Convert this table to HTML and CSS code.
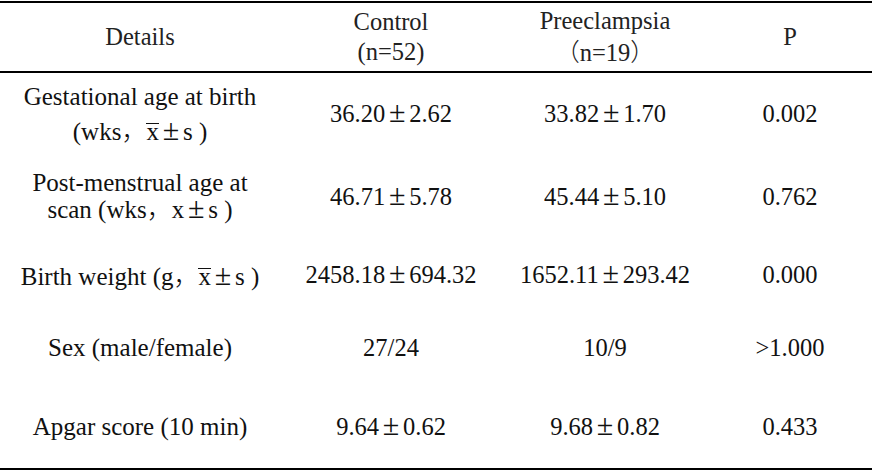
FILE: index.html
```html
<!DOCTYPE html>
<html lang="en">
<head>
<meta charset="utf-8">
<title>Table</title>
<link rel="stylesheet" href="styles.css">
</head>
<body>
<table class="data">
  <colgroup>
    <col class="c1"><col class="c2"><col class="c3"><col class="c4">
  </colgroup>
  <thead>
    <tr class="head">
      <th>Details</th>
      <th><span class="stack">Control<br>(n=52)</span></th>
      <th><span class="stack">Preeclampsia<br><span class="cjk">（</span>n=19<span class="cjk">）</span></span></th>
      <th>P</th>
    </tr>
  </thead>
  <tbody>
    <tr class="r1">
      <td class="label"><span class="stack lh32">Gestational age at birth<br>(wks<span class="cjk">，</span><span class="xbar">x</span><span class="pm">±</span>s )</span></td>
      <td>36.20<span class="pm">±</span>2.62</td>
      <td>33.82<span class="pm">±</span>1.70</td>
      <td>0.002</td>
    </tr>
    <tr class="r2">
      <td class="label"><span class="stack lh24">Post-menstrual age at<br>scan (wks<span class="cjk">，</span>x<span class="pm">±</span>s )</span></td>
      <td>46.71<span class="pm">±</span>5.78</td>
      <td>45.44<span class="pm">±</span>5.10</td>
      <td>0.762</td>
    </tr>
    <tr class="r3">
      <td class="label">Birth weight (g<span class="cjk">，</span><span class="xbar">x</span><span class="pm">±</span>s )</td>
      <td>2458.18<span class="pm">±</span>694.32</td>
      <td>1652.11<span class="pm">±</span>293.42</td>
      <td>0.000</td>
    </tr>
    <tr class="r4">
      <td class="label">Sex (male/female)</td>
      <td>27/24</td>
      <td>10/9</td>
      <td>&gt;1.000</td>
    </tr>
    <tr class="r5">
      <td class="label">Apgar score (10 min)</td>
      <td>9.64<span class="pm">±</span>0.62</td>
      <td>9.68<span class="pm">±</span>0.82</td>
      <td>0.433</td>
    </tr>
  </tbody>
</table>
</body>
</html>
```

FILE: styles.css
```css
html, body {
  margin: 0;
  padding: 0;
  background: #ffffff;
}

body {
  font-family: "Liberation Serif", "Times New Roman", serif;
  font-size: 24.5px;
  color: #111111;
}

.data {
  width: 872px;
  margin-top: 1px;
  border-collapse: collapse;
  table-layout: fixed;
  border-top: 2px solid #000;
  border-bottom: 2px solid #000;
}

.c1 { width: 280px; }
.c2 { width: 222px; }
.c3 { width: 206px; }
.c4 { width: 164px; }

.data th,
.data td {
  padding: 0;
  text-align: center;
  vertical-align: middle;
  font-weight: normal;
  white-space: nowrap;
  line-height: 28px;
}

.data td.label {
  font-size: 25px;
}

.head th {
  height: 68px;
  border-bottom: 2px solid #000;
  color: #222;
}

.stack {
  display: inline-block;
  line-height: 30px;
}

.stack.lh32 { line-height: 32px; }
.stack.lh24 { line-height: 24px; }

.r1 td { height: 82px; }
.r2 td { height: 84px; }
.r3 td { height: 72px; }
.r4 td { height: 74px; }
.r5 td { height: 83px; }

.cjk {
  font-family: "Noto Sans CJK SC", sans-serif;
  font-weight: 300;
}

.pm {
  display: inline-block;
  width: 24px;
  text-align: center;
  font-size: 30px;
  line-height: 20px;
  font-weight: normal;
}

.xbar {
  display: inline-block;
  line-height: 16px;
  border-top: 1.5px solid #111;
}
```
